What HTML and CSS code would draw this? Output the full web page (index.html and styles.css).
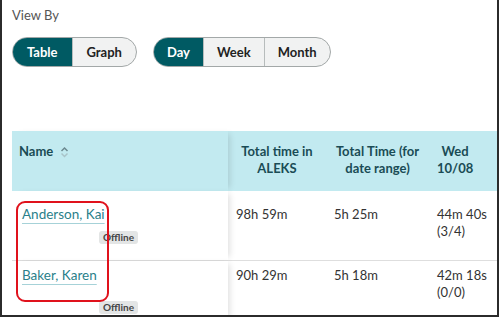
FILE: index.html
```html
<!DOCTYPE html>
<html>
<head>
<meta charset="utf-8">
<link rel="stylesheet" href="styles.css">
</head>
<body>
<div class="frame">
  <div class="viewby">View By</div>
  <div class="toggles">
    <div class="seg-group">
      <span class="seg active">Table</span><span class="seg">Graph</span>
    </div>
    <div class="seg-group">
      <span class="seg active">Day</span><span class="seg">Week</span><span class="seg">Month</span>
    </div>
  </div>
  <div class="table">
    <div class="row head">
      <div class="cell first name-head">Name
        <svg class="sort" width="9" height="12" viewBox="0 0 9 12"><path d="M1.5 5 L4.5 2 L7.5 5" fill="none" stroke="#6d8a90" stroke-width="1.5"/><path d="M1.5 7.5 L4.5 10.5 L7.5 7.5" fill="none" stroke="#a9c4c9" stroke-width="1.5"/></svg>
      </div>
      <div class="cell c">Total time in<br>ALEKS</div>
      <div class="cell c">Total Time (for<br>date range)</div>
      <div class="cell c narrow">Wed<br>10/08</div>
    </div>
    <div class="row body r1">
      <div class="cell first">
        <div class="namebox">
          <a class="link" href="#">Anderson, Kai</a>
          <span class="badge">Offline</span>
        </div>
      </div>
      <div class="cell">98h 59m</div>
      <div class="cell">5h 25m</div>
      <div class="cell">44m 40s<br>(3/4)</div>
    </div>
    <div class="row body r2">
      <div class="cell first">
        <div class="namebox">
          <a class="link" href="#">Baker, Karen</a>
          <span class="badge">Offline</span>
        </div>
      </div>
      <div class="cell">90h 29m</div>
      <div class="cell">5h 18m</div>
      <div class="cell">42m 18s<br>(0/0)</div>
    </div>
  </div>
  <div class="annot"></div>
</div>
</body>
</html>
```

FILE: styles.css
```css
* { box-sizing: border-box; }
html, body { margin: 0; padding: 0; background: #fff; }
body { font-family: Lato, "Liberation Sans", sans-serif; color: #333; }

.frame {
  position: relative;
  width: 499px;
  height: 317px;
  border-left: 2px solid #2b2b2b;
  border-right: 2px solid #2b2b2b;
  border-bottom: 2px solid #2b2b2b;
  padding: 7px 0 0 10px;
  overflow: hidden;
}

.viewby { font-size: 13px; color: #555; line-height: 16px; }

.toggles { display: flex; gap: 16px; margin-top: 14px; }

.seg-group {
  display: flex;
  height: 30px;
  border: 1.5px solid #a3a8a8;
  border-radius: 15px;
  overflow: hidden;
  background: #f1f2f2;
}
.seg {
  display: flex;
  align-items: center;
  justify-content: center;
  padding: 0 14px;
  font-size: 13px;
  font-weight: 700;
  color: #222;
  border-left: 1.5px solid #b7bcbc;
}
.seg:first-child { border-left: none; }
.seg.active { background: #005a63; color: #fff; }
.seg-group + .seg-group .seg { padding: 0 13px; }

.table { margin-top: 64px; width: 485px; }
.row {
  display: grid;
  grid-template-columns: 216px 98px 103px 1fr;
}
.head { background: #c2eaf0; height: 60px; }
.cell { padding: 0 8px; font-size: 13px; line-height: 17px; }
.first { position: relative; z-index: 1; box-shadow: 5px 0 6px -3px rgba(0,0,0,0.12); background: inherit; }
.head .cell { padding-top: 12px; font-weight: 700; color: #1a4c55; }
.head .c { text-align: center; }
.head .narrow { justify-self: start; }
.name-head { display: flex; align-items: flex-start; gap: 7px; padding-left: 7px !important; }
.sort { margin-top: 3px; }

.body { background: #fff; color: #333; }
.r1 { height: 70px; border-bottom: 1px solid #dedede; }
.r1 .cell { padding-top: 15px; }
.r2 { height: 60px; }
.r2 .cell { padding-top: 6px; }

.namebox {
  display: flex;
  flex-direction: column;
  align-items: flex-end;
  width: 118px;
  padding-left: 2px;
}
.link {
  align-self: flex-start;
  color: #2a7f8a;
  text-decoration: underline;
  text-decoration-color: #a6d2d8;
  text-underline-offset: 4px;
  font-size: 13.5px;
  line-height: 17px;
}
.badge {
  background: #e3e5e5;
  color: #444;
  font-size: 10px;
  font-weight: 700;
  line-height: 13px;
  padding: 0 4px;
  border-radius: 3px;
  margin-top: 8px;
}
.r2 .badge { margin-top: 17px; }

.annot {
  position: absolute;
  left: 14px;
  top: 201px;
  width: 93px;
  height: 101px;
  border: 2px solid #e0121c;
  border-radius: 9px;
  z-index: 2;
}
```
